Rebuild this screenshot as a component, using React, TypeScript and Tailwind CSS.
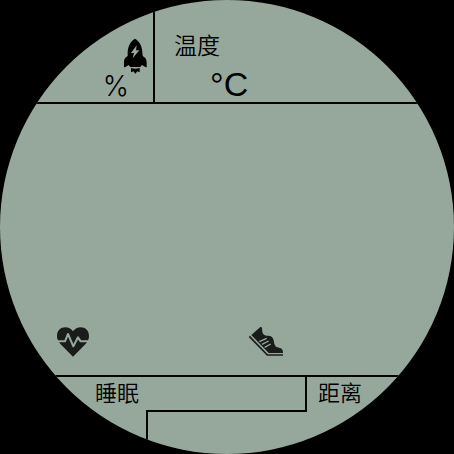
import React from "react";

const cjk = "font-['Noto_Sans_CJK_SC',sans-serif] font-[350]";

function RocketIcon() {
  return (
    <svg viewBox="0 0 72 108" className="h-9 w-6" aria-hidden="true">
      <path
        fill="#000"
        fillRule="evenodd"
        d="M36 2C23 9 15 24 14 42L14 54C6 58 3 64 3 73L3 87Q4 89 7 87L17 81L22 87L52 87L57 81L67 87Q70 89 71 87L71 73C71 64 67 58 59 54L58 42C57 24 49 9 36 2ZM41 22L24 45L33 45L29 61L49 37L39 37Z"
      />
      <path fill="#000" d="M24 90Q37 95 50 90L50 103L43 100L37 107L31 100L24 103Z" />
    </svg>
  );
}

function HeartIcon() {
  return (
    <svg viewBox="0 0 96 90" className="h-[30px] w-8" aria-hidden="true">
      <path
        fill="#1a1c1b"
        d="M48 89L11 52Q0 41 0 27C0 11 11 1 25 1Q39 1 48 13Q57 1 71 1C85 1 96 11 96 27Q96 41 85 52Z"
      />
      <path
        fill="none"
        stroke="#96a89c"
        strokeWidth="6"
        strokeLinejoin="round"
        d="M0 43H24L33 21L49 58L63 31L71 43H96"
      />
    </svg>
  );
}

function ShoeIcon() {
  return (
    <svg viewBox="0 0 108 93" className="h-[31px] w-9" aria-hidden="true">
      <path
        fill="#1a1c1b"
        d="M37 3Q41 2 42 6L43 18C45 27 52 30 60 29Q72 29 76 39L79 53C81 61 86 64 93 65Q105 67 105 80L105 81L62 81L10 27Z"
      />
      <path fill="none" stroke="#1a1c1b" strokeWidth="5" d="M4 31L58 87H105" />
      <path
        fill="none"
        stroke="#96a89c"
        strokeWidth="4"
        d="M34 47L56 37M42 55L62 45M50 64L68 54"
      />
    </svg>
  );
}

export default function App() {
  return (
    <div className="w-full bg-black text-black">
      <main className="flex aspect-square w-full flex-col overflow-hidden rounded-full bg-[#96a89c]">
        <header className="flex h-[104px] border-b-2 border-black">
          <section className="flex w-[155px] flex-col items-end border-r-2 border-black pt-[38px] pr-1.5">
            <RocketIcon />
            <span className="-mt-1 pr-[18px] font-['Inter',sans-serif] text-[28px] leading-8 font-light">
              %
            </span>
          </section>
          <section className="flex flex-1 flex-col pt-7 pl-[19px]">
            <h2 className={`${cjk} text-[23px] leading-8`}>温度</h2>
            <p className="flex pt-1 pl-9 leading-10">
              <span className="font-['Inter',sans-serif] text-[30px] font-light">°</span>
              <span className="font-['Liberation_Sans',sans-serif] text-[34px]">C</span>
            </p>
          </section>
        </header>

        <section className="flex flex-1 items-end pb-[18px] pl-[57px]">
          <div className="w-[191px]">
            <HeartIcon />
          </div>
          <ShoeIcon />
        </section>

        <footer className="h-[79px] border-t-2 border-black">
          <div className="flex h-[33px]">
            <h2 className={`${cjk} w-[307px] border-r-2 border-black pl-[95px] text-[22px] leading-7`}>
              睡眠
            </h2>
            <h2 className={`${cjk} pl-[11px] text-[22px] leading-7`}>距离</h2>
          </div>
          <div className="ml-[146px] h-11 w-[161px] border-t-2 border-l-2 border-black" />
        </footer>
      </main>
    </div>
  );
}
